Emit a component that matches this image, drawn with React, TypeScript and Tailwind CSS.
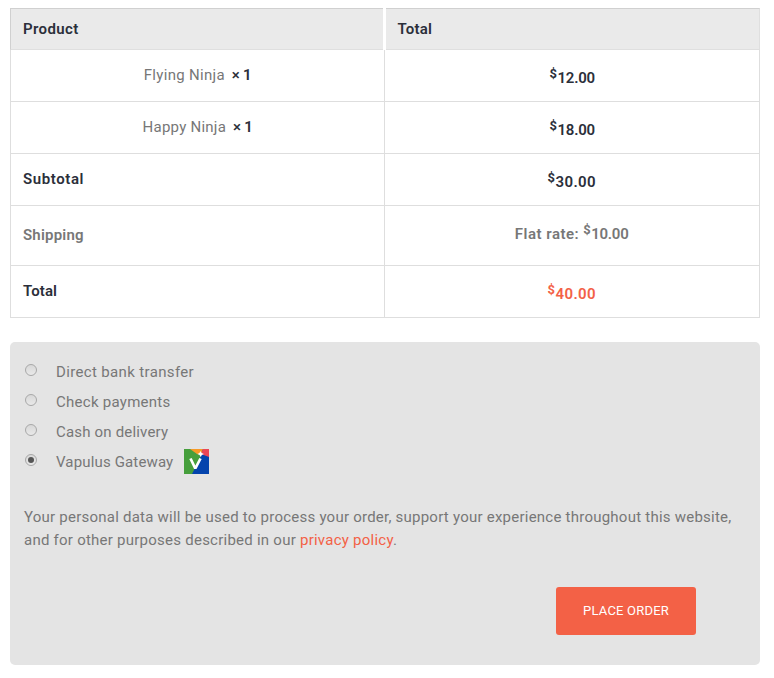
import React from "react";

function Price({ value, className = "", valueClass = "w-[37px]" }: { value: string; className?: string; valueClass?: string }) {
  return (
    <span className={`inline-flex text-[15px] font-semibold leading-5 ${className}`}>
      <span className="-mt-1 w-2 text-[13px] font-bold leading-5">$</span>
      <span className={`whitespace-nowrap ${valueClass}`}>{value}</span>
    </span>
  );
}

function Row({ left, right, className = "h-[52px]" }: { left: React.ReactNode; right: React.ReactNode; className?: string }) {
  return (
    <div className={`grid grid-cols-[374px_375px] border-b border-l border-[#dedede] ${className}`}>
      <div className="flex items-center border-r border-[#dedede] pl-3 pb-px">{left}</div>
      <div className="flex items-center justify-center border-r border-[#dedede]">{right}</div>
    </div>
  );
}

function Item({ name, className }: { name: string; className: string }) {
  return (
    <div className="flex w-full justify-center pr-3 text-[15px]">
      <span className={className}>{name}</span>
      <span className="ml-[7px] font-semibold tracking-[-0.3px] text-[#2b2f3a]">× 1</span>
    </div>
  );
}

function Option({ label, checked = false, className, children }: { label: string; checked?: boolean; className: string; children?: React.ReactNode }) {
  return (
    <label className="flex h-[30px] items-center">
      <span className="mb-1 flex size-3 items-center justify-center rounded-full border border-[#a8a8a8] bg-linear-to-b from-[#d8d8d8] to-[#e9e9e9]">
        {checked && <span className="size-1.5 rounded-full bg-[#555]" />}
      </span>
      <span className={`ml-[19px] whitespace-nowrap text-[15px] ${className}`}>{label}</span>
      {children}
    </label>
  );
}

function Logo() {
  return (
    <svg className="ml-[11px] -mt-px size-[25px]" viewBox="0 0 25 25">
      <rect width="25" height="25" fill="#0444ad" />
      <path d="M0 0H7L17 7L8 25H0Z" fill="#469f3c" />
      <path d="M6 0H19L17 6L13 5Z" fill="#f79a27" />
      <path d="M19 0H25V8L17 5Z" fill="#eb4656" />
      <path d="M16.5 2L17.7 4L20 5L17.8 6L16.8 8L15.5 6L13.5 5L15.5 4Z" fill="#fff" />
      <path d="M6.5 9.5L11.3 19.5L16.5 9.5" fill="none" stroke="#fff" strokeWidth="2.7" strokeLinejoin="bevel" />
    </svg>
  );
}

export default function App() {
  return (
    <main className="h-[678px] w-[774px] bg-white pl-2.5 pt-2 font-['Roboto',sans-serif] text-[15px] text-[#777]">
      <section className="w-[750px]">
        <div className="flex h-[42px] gap-[3px] text-[#2b2f3a]">
          <div className="flex w-[373px] items-center border border-r-0 border-[#dfdfdf] border-t-[#d0d0d0] border-l-[#d0d0d0] bg-[#eaeaea] pl-3 font-semibold">
            <span className="tracking-[0.4px]">Product</span>
          </div>
          <div className="flex w-[374px] items-center border border-l-0 border-[#dfdfdf] border-t-[#d0d0d0] bg-[#eaeaea] pl-[11.5px] font-semibold">
            <span className="tracking-[0.2px]">Total</span>
          </div>
        </div>
        <Row left={<Item name="Flying Ninja" className="tracking-[0.3px]" />} right={<Price value="12.00" className="mt-1 text-[#2b2f3a]" valueClass="w-[37px] tracking-[-0.25px]" />} />
        <Row left={<Item name="Happy Ninja" className="tracking-[0.25px]" />} right={<Price value="18.00" className="mt-1 text-[#2b2f3a]" valueClass="w-[37px] tracking-[-0.25px]" />} />
        <Row left={<span className="font-semibold tracking-[0.6px] text-[#2b2f3a]">Subtotal</span>} right={<Price value="30.00" className="mt-1 text-[#2b2f3a]" valueClass="w-[41px] tracking-[0.4px]" />} />
        <Row
          className="h-[60px]"
          left={<span className="font-semibold tracking-[0.2px]">Shipping</span>}
          right={<div className="flex items-center pr-px pb-[3px] font-semibold"><span className="mr-[4px] tracking-[0.5px]">Flat rate:</span><Price value="10.00" valueClass="w-[37px] tracking-[-0.25px]" /></div>}
        />
        <Row left={<span className="font-semibold tracking-[0.1px] text-[#2b2f3a]">Total</span>} right={<Price value="40.00" className="mt-1 text-[#f36146]" valueClass="w-[41px] tracking-[0.4px]" />} />
      </section>

      <section className="mt-6 h-[323px] w-[750px] rounded-[5px] bg-[#e4e4e4] pt-[15px] text-[#777]">
        <div className="pl-[15px]">
          <Option label="Direct bank transfer" className="w-[138px] tracking-[0.35px]" />
          <Option label="Check payments" className="w-[115px] tracking-[0.27px]" />
          <Option label="Cash on delivery" className="w-[113px] tracking-[0.18px]" />
          <Option label="Vapulus Gateway" checked className="w-[117px] tracking-[0.15px]"><Logo /></Option>
        </div>
        <p className="mt-[29px] whitespace-nowrap pl-3.5 leading-[23px]">
          <span className="tracking-[0.235px]">Your personal data will be used to process your order, support your experience throughout this website,</span>
          <br />
          <span className="tracking-[0.245px]">and for other purposes described in our <span className="text-[#f36146]">privacy policy</span>.</span>
        </p>
        <button className="ml-[546px] mt-[35px] flex h-12 w-[140px] items-center justify-center rounded-[3px] bg-[#f36146] text-[13px] text-white">
          <span className="tracking-[0.2px]">PLACE ORDER</span>
        </button>
      </section>
    </main>
  );
}
